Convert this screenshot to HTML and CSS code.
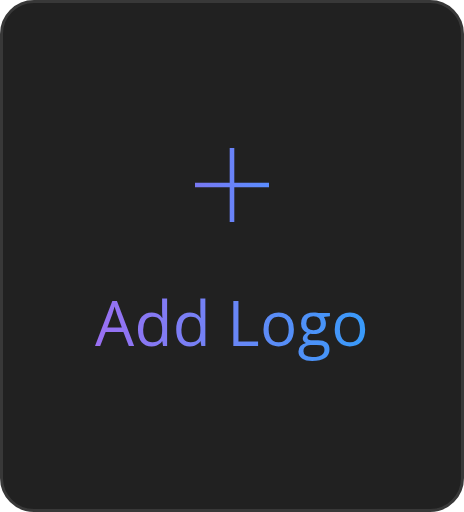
FILE: index.html
```html
<!DOCTYPE html>
<html>
<head>
<meta charset="utf-8">
<link rel="stylesheet" href="styles.css">
</head>
<body>
<div class="card">
  <svg class="plus" width="74" height="74" viewBox="0 0 74 74">
    <defs>
      <linearGradient id="pg" x1="0" y1="0" x2="1" y2="0">
        <stop offset="0" stop-color="#7878f2"/>
        <stop offset="1" stop-color="#5a8dff"/>
      </linearGradient>
    </defs>
    <path d="M37 0V74M0 37H74" stroke="url(#pg)" stroke-width="4.6" fill="none"/>
  </svg>
  <div class="label">Add Logo</div>
</div>
</body>
</html>
```
FILE: styles.css
```css
html, body {
  margin: 0;
  padding: 0;
  background: #ffffff;
}
.card {
  box-sizing: border-box;
  width: 464px;
  height: 512px;
  background: #212121;
  border: 3px solid #383838;
  border-radius: 34px;
  display: flex;
  flex-direction: column;
  align-items: center;
  padding-top: 145px;
}
.plus {
  display: block;
}
.label {
  margin-top: 60px;
  font-family: "Open Sans", sans-serif;
  font-size: 62px;
  line-height: 80px;
  letter-spacing: 0.25px;
  background: linear-gradient(90deg, #9a6ff2 0%, #6a86f6 50%, #379bfa 100%);
  -webkit-background-clip: text;
  background-clip: text;
  color: transparent;
}
```
